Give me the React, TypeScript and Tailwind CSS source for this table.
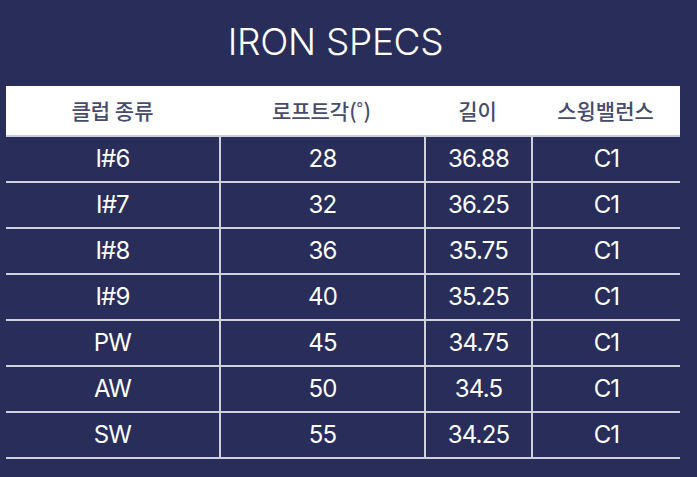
import React from "react";

const rows = [
  ["I#6", "28", "36.88", "C1"],
  ["I#7", "32", "36.25", "C1"],
  ["I#8", "36", "35.75", "C1"],
  ["I#9", "40", "35.25", "C1"],
  ["PW", "45", "34.75", "C1"],
  ["AW", "50", "34.5", "C1"],
  ["SW", "55", "34.25", "C1"],
];

const font = { fontFamily: 'Inter, "Noto Sans CJK KR", sans-serif' };

export default function App() {
  return (
    <div className="w-[697px] h-[477px] bg-[#282d5a] overflow-hidden" style={font}>
      <div className="pt-[19px] h-[86px] pr-[26px] text-center text-white text-[37px] leading-[46px] font-light tracking-[-0.3px]">
        IRON SPECS
      </div>
      <div className="ml-[6px] w-[674px]">
        <div className="grid grid-cols-[213px_205px_107px_149px] h-[51px] bg-white items-center text-center text-[#474c6c] text-[21px] font-medium border-b-2 border-[#c9cbd6]" style={{ fontFamily: '"Noto Sans CJK KR", sans-serif' }}>
          <div>클럽 종류</div>
          <div>로프트각(˚)</div>
          <div>길이</div>
          <div>스윙밸런스</div>
        </div>
        {rows.map((r, i) => (
          <div key={i} className="grid grid-cols-[213px_205px_107px_149px] h-[46px] items-stretch text-center text-white text-[24px] tracking-[-0.8px] border-b-2 border-[#cfd1dc]">
            <div className="flex items-center justify-center">{r[0]}</div>
            <div className="flex items-center justify-center border-l-2 border-[#cfd1dc]">{r[1]}</div>
            <div className="flex items-center justify-center border-l-2 border-[#cfd1dc]">{r[2]}</div>
            <div className="flex items-center justify-center border-l-2 border-[#cfd1dc]">{r[3]}</div>
          </div>
        ))}
      </div>
    </div>
  );
}
